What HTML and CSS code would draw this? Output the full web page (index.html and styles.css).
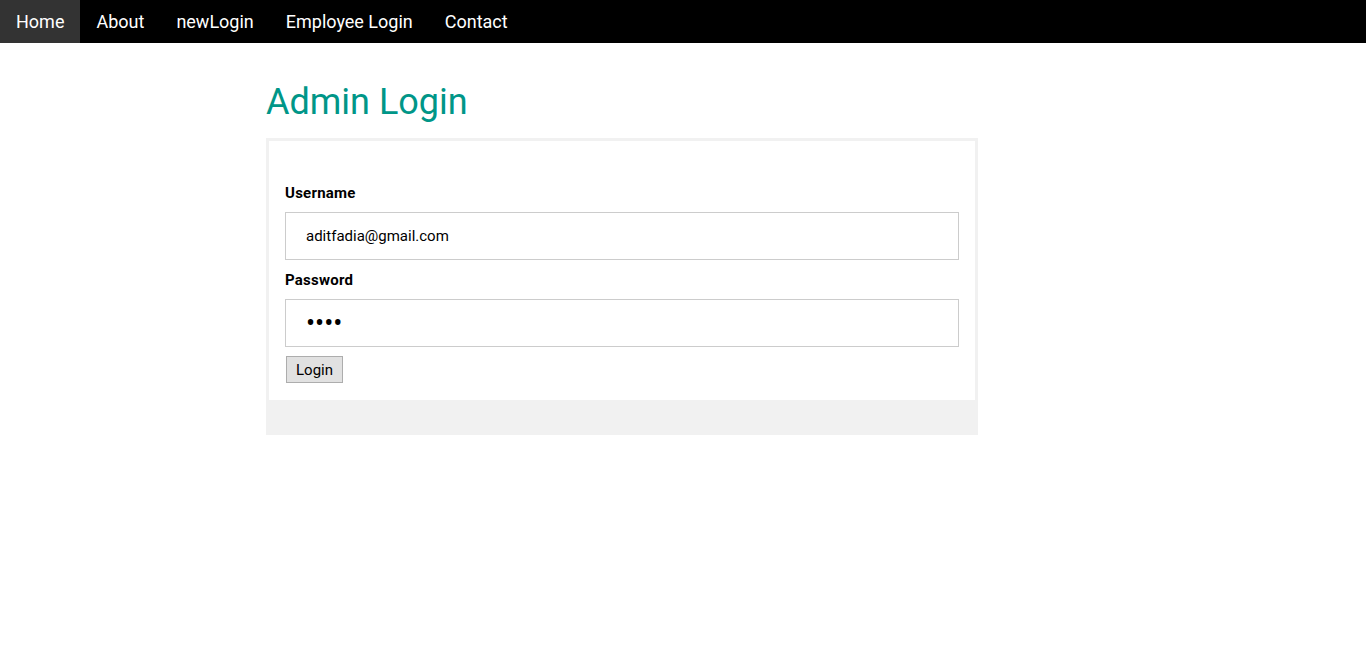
FILE: index.html
```html
<!DOCTYPE html>
<html>
<head>
<meta charset="utf-8">
<title>Admin Login</title>
<link rel="stylesheet" href="styles.css">
</head>
<body>
<nav class="bar">
  <a class="bar-item active" href="#">Home</a>
  <a class="bar-item" href="#">About</a>
  <a class="bar-item" href="#">newLogin</a>
  <a class="bar-item" href="#">Employee Login</a>
  <a class="bar-item" href="#">Contact</a>
</nav>
<main class="page">
  <h1 class="title">Admin Login</h1>
  <div class="card-wrap">
    <form class="card">
      <label class="label">Username</label>
      <input class="input" type="text" value="aditfadia@gmail.com">
      <label class="label">Password</label>
      <input class="input input-pass" type="password" value="abcd">
      <button class="btn" type="button">Login</button>
    </form>
  </div>
</main>
</body>
</html>
```
FILE: styles.css
```css
* { box-sizing: border-box; }
html, body { margin: 0; padding: 0; background: #fff; }
body { font-family: Roboto, "Liberation Sans", sans-serif; font-size: 15px; color: #000; }
.bar { display: flex; background: #000; height: 43px; }
.bar-item { display: block; padding: 8px 16px; font-size: 18px; line-height: 27px; color: #fff; text-decoration: none; }
.bar-item.active { background: #333; }
.page { width: 712px; margin-left: 266px; }
.title { margin: 29px 0 5px; font-weight: 400; font-size: 36px; line-height: 61px; color: #009688; }
.card-wrap { background: #f1f1f1; padding: 3px 3px 35px 3px; }
.card { background: #fff; padding: 41px 16px 17px 16px; display: flex; flex-direction: column; align-items: flex-start; }
.label { font-weight: 700; font-size: 15px; line-height: 22px; margin-bottom: 8px; letter-spacing: 0.25px; }
.input { width: 100%; height: 48px; border: 1px solid #ccc; padding: 0 20px; font-family: Roboto, "Liberation Sans", sans-serif; font-size: 15px; color: #000; margin-bottom: 9px; outline: none; }
.input-pass { font-size: 27px; letter-spacing: 0; }
.btn { margin: 0 0 0 1px; height: 27px; padding: 0 9px; font-family: Roboto, "Liberation Sans", sans-serif; font-size: 15px; background: #e1e1e1; border: 1px solid #adadad; color: #000; }
```
